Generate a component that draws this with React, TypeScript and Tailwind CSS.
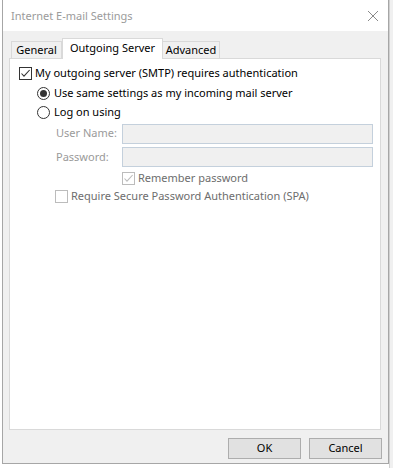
const font = { fontFamily: '"Segoe UI", "Noto Sans", "Liberation Sans", sans-serif' };

function Check({ checked, disabled }: { checked?: boolean; disabled?: boolean }) {
  const c = disabled ? "#bcbcbc" : "#333333";
  return (
    <span
      className={`w-[13px] h-[13px] shrink-0 border bg-white flex items-center justify-center ${disabled ? "border-[#bcbcbc]" : "border-[#333333]"}`}
    >
      {checked && (
        <svg width="11" height="11" viewBox="0 0 11 11">
          <path d="M1.5 5.5 L4 8.2 L9.6 2" fill="none" stroke={c} strokeWidth="1.1" />
        </svg>
      )}
    </span>
  );
}

function Radio({ checked }: { checked?: boolean }) {
  return (
    <span className="w-[13px] h-[13px] shrink-0 rounded-full border border-[#333333] bg-white flex items-center justify-center">
      {checked && <span className="w-[7px] h-[7px] rounded-full bg-[#333333]" />}
    </span>
  );
}

function Field({ label }: { label: string }) {
  return (
    <div className="flex items-center h-full">
      <span className="w-[66px] pl-[46px] box-content whitespace-nowrap text-[#9a9a9a]">{label}</span>
      <div className="w-[251px] h-[20px] bg-[#f0f0f0] border border-[#c4d0dc]" />
    </div>
  );
}

export default function App() {
  return (
    <div className="w-[393px] h-[468px] bg-white flex overflow-hidden text-[11px] text-black" style={font}>
      <div className="w-[2px] shrink-0" />
      <div className="w-[387px] h-[464px] shrink-0 flex flex-col border-l border-r border-b border-[#a6a6a6] bg-[#f0f0f0]">
        {/* title bar */}
        <div className="h-[31px] bg-white flex items-center justify-between pl-[8px] pr-[8px]">
          <span className="text-[11px] text-[#9b9b9b] leading-none">Internet E-mail Settings</span>
          <svg width="12" height="12" viewBox="0 0 12 12" className="mr-[1px]">
            <path d="M1 1 L11 11 M11 1 L1 11" stroke="#8a8a8a" strokeWidth="1" />
          </svg>
        </div>

        <div className="pt-[7px] pl-[6px]">
          {/* tabs */}
          <div className="flex items-end h-[20px] pl-[2px]">
            <div className="w-[51px] h-[17px] border border-b-0 border-[#d9d9d9] flex items-center justify-center pt-[1px]">General</div>
            <div className="relative z-10 w-[101px] h-[21px] -mb-px bg-white border border-b-0 border-[#d9d9d9] flex items-center justify-center pb-[2px]">
              Outgoing Server
            </div>
            <div className="w-[57px] h-[17px] border border-b-0 border-l-0 border-[#d9d9d9] flex items-center justify-center pt-[1px]">Advanced</div>
          </div>

          {/* panel */}
          <div className="w-[372px] h-[372px] bg-white border border-[#d9d9d9] pt-[5px]">
            <div className="h-[19px] flex items-center pl-[9px]">
              <Check checked />
              <span className="ml-[3px]">My outgoing server (SMTP) requires authentication</span>
            </div>
            <div className="h-[20px] flex items-center pl-[27px]">
              <Radio checked />
              <span className="ml-[4px]">Use same settings as my incoming mail server</span>
            </div>
            <div className="h-[18px] flex items-center pl-[27px]">
              <Radio />
              <span className="ml-[4px]">Log on using</span>
            </div>
            <div className="h-[21px] mt-[2px]">
              <Field label="User Name:" />
            </div>
            <div className="h-[20px] mt-[3px]">
              <Field label="Password:" />
            </div>
            <div className="h-[22px] flex items-center pl-[112px]">
              <Check checked disabled />
              <span className="ml-[3px] text-[#6d6d6d]">Remember password</span>
            </div>
            <div className="h-[15px] flex items-center pl-[45px]">
              <Check disabled />
              <span className="ml-[3px] text-[#6d6d6d]">Require Secure Password Authentication (SPA)</span>
            </div>
          </div>

          {/* buttons */}
          <div className="flex justify-end gap-[8px] pr-[6px] mt-[8px]">
            <button className="w-[73px] h-[21px] bg-[#e1e1e1] border border-[#adadad]">OK</button>
            <button className="w-[73px] h-[21px] bg-[#e1e1e1] border border-[#adadad]">Cancel</button>
          </div>
        </div>
      </div>
      <div className="flex-1 bg-[#f0f0f0] border-l border-[#d0d0d0]" />
    </div>
  );
}
